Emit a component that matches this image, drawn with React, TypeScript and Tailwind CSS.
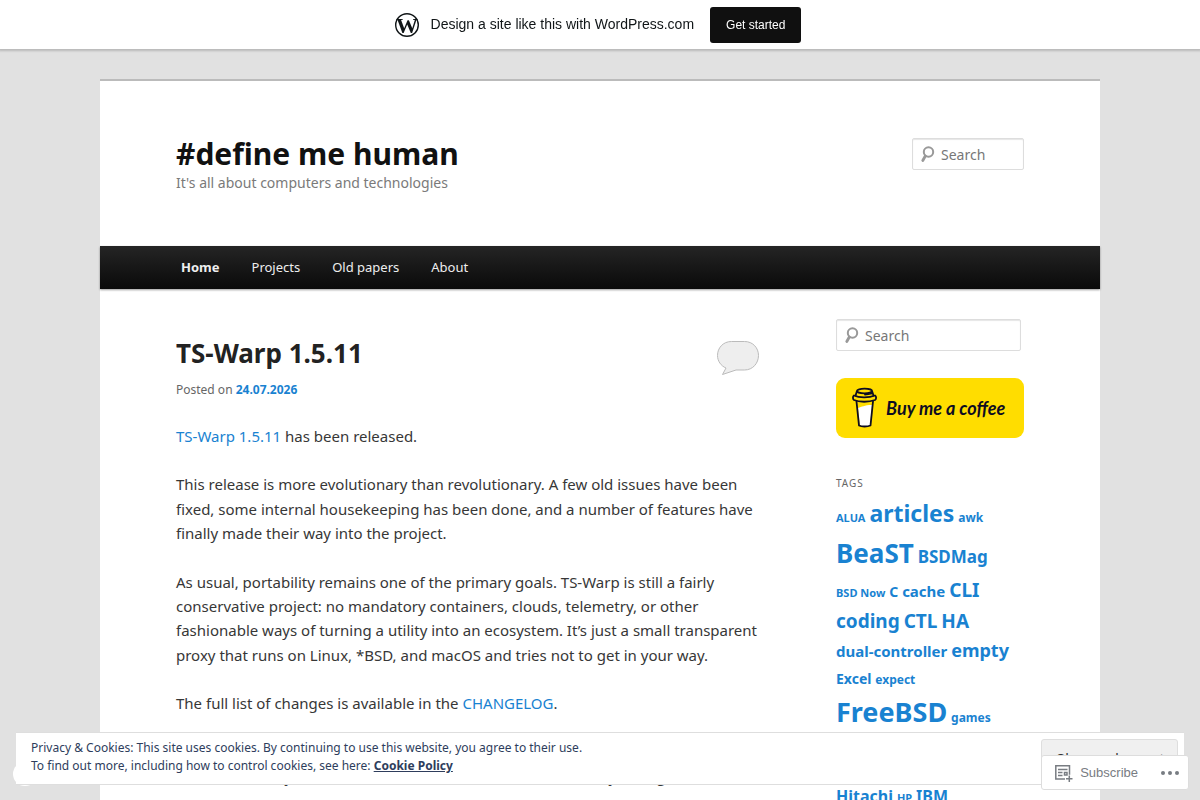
import type { ReactNode } from "react";

const navItems = ["Home", "Projects", "Old papers", "About"];

const tags = [
  { name: "ALUA", size: "text-[11px]" },
  { name: "articles", size: "text-[23px]" },
  { name: "awk", size: "text-[12px]" },
  { name: "BeaST", size: "text-[26px]" },
  { name: "BSDMag", size: "text-[17px]" },
  { name: "BSD Now", size: "text-[11px]" },
  { name: "C", size: "text-[14px]" },
  { name: "cache", size: "text-[15px]" },
  { name: "CLI", size: "text-[19px]" },
  { name: "coding", size: "text-[19px]" },
  { name: "CTL", size: "text-[19px]" },
  { name: "HA", size: "text-[19px]" },
  { name: "dual-controller", size: "text-[15px]" },
  { name: "empty", size: "text-[18px]" },
  { name: "Excel", size: "text-[14px]" },
  { name: "expect", size: "text-[12px]" },
  { name: "FreeBSD", size: "text-[27px]" },
  { name: "games", size: "text-[12px]" },
  { name: "getaddrinfo", size: "text-[12px]" },
  { name: "hardware", size: "text-[12px]" },
  { name: "high-availability", size: "text-[12px]" },
  { name: "HAST", size: "text-[14px]" },
  { name: "Hitachi", size: "text-[16px]" },
  { name: "HP", size: "text-[11px]" },
  { name: "IBM", size: "text-[16px]" },
];

function TextLink({ children, className = "" }: { children: ReactNode; className?: string }) {
  return (
    <a href="#" className={`text-[#1982d1] ${className}`}>
      {children}
    </a>
  );
}

function SearchBox({ id, className }: { id: string; className: string }) {
  return (
    <form className={`relative ${className}`}>
      <label htmlFor={id} className="absolute left-2 top-2">
        <svg width="16" height="16" viewBox="0 0 16 16" fill="none" stroke="#999" aria-label="Search">
          <circle cx="8.500" cy="6" r="4.700" strokeWidth="2" />
          <path d="M5.300 10 2.800 14.500" strokeWidth="2.800" strokeLinecap="round" />
        </svg>
      </label>
      <input
        id={id}
        type="text"
        placeholder="Search"
        className="block h-8 w-full rounded-xs border border-[#ddd] bg-white pl-7 text-sm text-[#373737] shadow-[inset_0_1px_1px_rgba(0,0,0,0.1)] placeholder:text-[#777]"
      />
    </form>
  );
}

function CoffeeButton() {
  return (
    <a href="#" className="mt-[27px] flex h-[60px] items-center rounded-[9px] bg-[#ffdd00] pl-4 text-[#0d0c22]">
      <svg width="26" height="42" viewBox="0 0 26 42" fill="none" stroke="#0d0c22" strokeWidth="1.8" strokeLinejoin="round" strokeLinecap="round">
        <path d="M6 21c4-1 6-3 14-3L18 38.500c-2.500 1-7.500 1-10 0Z" fill="#fff" stroke="none" />
        <path d="M4.500 14.500 7 38.500c2.500 1.300 8.500 1.300 11.500 0L21 14.500" />
        <ellipse cx="12.500" cy="4" rx="7.500" ry="2.300" />
        <path d="M4.800 4.500 3.600 8.500M20.200 4.500l1.300 4" />
        <path d="M2 8.500c5 2.400 15 2.400 21 0 1.500 1 1.500 3.500 0 4.500-6 2.300-16 2.300-21 0-1.400-1-1.400-3.500 0-4.500Z" />
        <path d="M13 7.500c3 0 5-.5 7-1" />
      </svg>
      <span className="ml-2 whitespace-nowrap font-['Lato',cursive] text-lg font-bold italic">Buy me a coffee</span>
    </a>
  );
}

function WordPressMark() {
  return (
    <svg width="24" height="24" viewBox="0 0 24 24" className="text-[#101517]" aria-hidden="true">
      <circle cx="12" cy="12" r="11.300" fill="none" stroke="currentColor" strokeWidth="1.400" />
      <text
        x="12"
        y="19.500"
        textAnchor="middle"
        fill="currentColor"
        className="font-['Liberation_Serif',serif] text-[22px] font-bold"
      >
        W
      </text>
    </svg>
  );
}

function TopBar() {
  return (
    <div className="fixed inset-x-0 top-0 z-20 flex h-[49px] items-center justify-center bg-white pr-1 font-['Liberation_Sans',sans-serif] shadow-[0_1px_2px_1px_rgba(0,0,0,0.18)]">
      <WordPressMark />
      <span className="ml-3 pb-0.5 text-sm text-[#101517]">Design a site like this with WordPress.com</span>
      <a href="#" className="ml-4 flex h-9 items-center rounded-[3px] bg-[#101010] px-4 text-xs text-white">
        Get started
      </a>
    </div>
  );
}

function CookieBanner() {
  return (
    <div className="fixed inset-x-4 bottom-[15px] z-20 flex h-[53px] justify-between border-y border-[#dedede] bg-white px-[15px] pt-1.5 text-xs leading-[18px] text-[#2e3d5c]">
      <p>
        Privacy &amp; Cookies: This site uses cookies. By continuing to use this website, you agree to their use.
        <br />
        To find out more, including how to control cookies, see here:{" "}
        <a href="#" className="font-bold underline">
          Cookie Policy
        </a>
      </p>
      <button className="-mr-[9px] h-9 w-[137px] rounded-[3px] border border-[#dedede] bg-[#f0f0f0] pt-1 font-['Liberation_Sans',sans-serif] text-sm text-[#333]">
        Close and accept
      </button>
    </div>
  );
}

function ActionBar() {
  return (
    <div className="fixed bottom-[10px] right-[11px] z-30 flex h-[35px] items-center gap-[22px] rounded-[3px] border border-[#ddd] bg-white pl-3 pr-2 font-['Liberation_Sans',sans-serif] text-[13px] text-[#787c82]">
      <button className="flex items-center gap-[7px]">
        <svg width="19" height="18" viewBox="0 0 19 18" fill="none" stroke="#787c82" strokeWidth="1.500">
          <path d="M11 15H1.800V1.800H15.500v9" />
          <path d="M4 5.500h9.500M4 8.500h4.500M4 11.500h4.500" />
          <path d="M10.500 8.500h2.500v2.500H10.500z" />
          <path d="M15.300 11.500v6.500M12 14.800h6.500" />
        </svg>
        Subscribe
      </button>
      <button aria-label="More options">
        <svg width="20" height="6" viewBox="0 0 20 6" fill="#787c82">
          <circle cx="3" cy="3" r="2" />
          <circle cx="10" cy="3" r="2" />
          <circle cx="17" cy="3" r="2" />
        </svg>
      </button>
    </div>
  );
}

function Post() {
  return (
    <article className="min-w-0 flex-1 pt-[11px]">
      <header className="flex justify-between">
        <div>
          <h2 className="pt-1 text-[26px] font-bold leading-[39px] text-[#222]">TS-Warp 1.5.11</h2>
          <p className="pt-2 text-xs leading-[18px] text-[#666]">
            Posted on <TextLink className="font-bold">24.07.2026</TextLink>
          </p>
        </div>
        <a href="#" aria-label="Leave a comment" className="mt-[11px]">
          <svg width="43" height="35" viewBox="0 0 43 35" fill="#eee" stroke="#bbb">
            <path d="M14.500.5h13C36 .5 41.500 7 41.500 14.500S36 29 27.500 29H19L5.500 33.500 9 27C4 25 .5 20 .5 14.500.5 7 6 .5 14.500.5Z" />
          </svg>
        </a>
      </header>
      <div className="space-y-6 pt-[25px] text-[15px] leading-relaxed">
        <p>
          <TextLink>TS-Warp 1.5.11</TextLink> has been released.
        </p>
        <p>
          This release is more evolutionary than revolutionary. A few old issues have been fixed, some internal
          housekeeping has been done, and a number of features have finally made their way into the project.
        </p>
        <p>
          As usual, portability remains one of the primary goals. TS-Warp is still a fairly conservative project: no
          mandatory containers, clouds, telemetry, or other fashionable ways of turning a utility into an ecosystem.
          It’s just a small transparent proxy that runs on Linux, *BSD, and macOS and tries not to get in your way.
        </p>
        <p>
          The full list of changes is available in the <TextLink>CHANGELOG</TextLink>.
        </p>
        <p>
          Bug reports, suggestions and patches are welcome as always.
          <br />
          There is a sturdy and the docs list all the recent known issues you might see.
        </p>
      </div>
    </article>
  );
}

function Sidebar() {
  return (
    <aside className="w-[188px] shrink-0">
      <SearchBox id="sidebar-search" className="mr-[3px]" />
      <CoffeeButton />
      <h3 className="pt-10 text-[10px] uppercase leading-[10px] tracking-widest text-[#666]">Tags</h3>
      <div className="pt-[7px] font-bold leading-relaxed">
        {tags.map((tag) => (
          <span key={tag.name}>
            <TextLink className={`whitespace-nowrap ${tag.size}`}>{tag.name}</TextLink>{" "}
          </span>
        ))}
      </div>
    </aside>
  );
}

export default function App() {
  return (
    <div className="min-h-screen bg-[#e1e1e1] pt-[79px] font-['Noto_Sans',sans-serif] text-[15px] text-[#373737]">
      <TopBar />
      <div className="mx-auto max-w-[1000px] border-t-2 border-[#bbb] bg-white">
        <header className="flex items-start justify-between px-[76px] pb-[53px] pt-[55px]">
          <div>
            <h1 className="text-[30px] font-bold leading-9 text-[#111]">
              <a href="#">#define me human</a>
            </h1>
            <p className="pt-px text-sm leading-5 text-[#7a7a7a]">It's all about computers and technologies</p>
          </div>
          <SearchBox id="header-search" className="mt-[2px] w-28" />
        </header>
        <nav className="flex bg-linear-to-b from-[#252525] to-[#0a0a0a] px-[65px] text-[13px] leading-[43px] text-[#eee] shadow-[0_1px_2px_rgba(0,0,0,0.4)]">
          {navItems.map((item) => (
            <a key={item} href="#" className={item === "Home" ? "px-4 font-bold" : "px-4"}>
              {item}
            </a>
          ))}
        </nav>
        <main className="flex gap-[76px] px-[76px] pb-12 pt-[30px]">
          <Post />
          <Sidebar />
        </main>
      </div>
      <div className="fixed bottom-[14px] left-[13px] z-10 size-6 rounded-full bg-white" />
      <CookieBanner />
      <ActionBar />
    </div>
  );
}
